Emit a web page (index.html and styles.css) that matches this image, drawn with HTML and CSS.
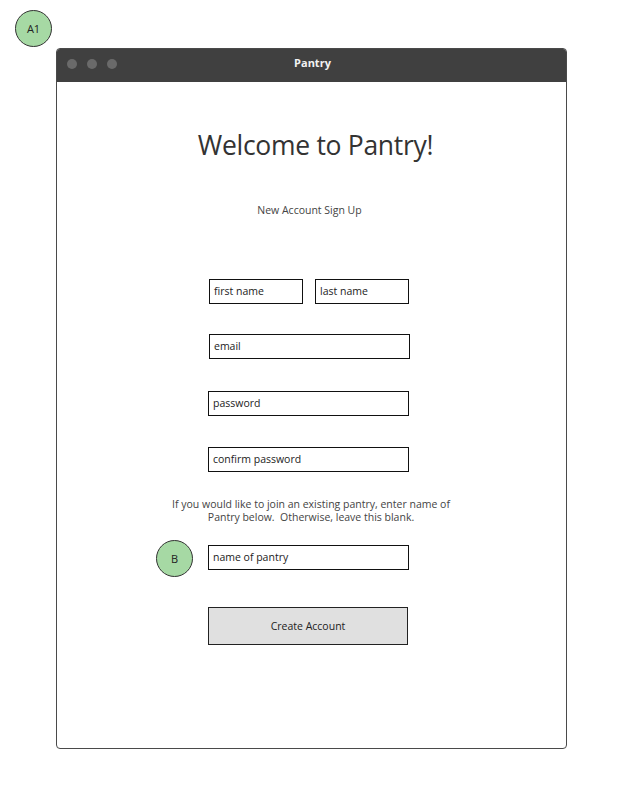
FILE: index.html
```html
<!DOCTYPE html>
<html>
<head>
<meta charset="utf-8">
<link rel="stylesheet" href="styles.css">
</head>
<body>
<div class="page">
  <div class="badge badge-a1">A1</div>
  <div class="window">
    <div class="titlebar">
      <div class="dots"><span class="dot"></span><span class="dot"></span><span class="dot"></span></div>
      <div class="title">Pantry</div>
    </div>
    <div class="content">
      <h1 class="heading">Welcome to Pantry!</h1>
      <p class="subheading">New Account Sign Up</p>
      <div class="form">
        <div class="row row-names">
          <div class="field field-half">first name</div>
          <div class="field field-half">last name</div>
        </div>
        <div class="row row-email"><div class="field field-email">email</div></div>
        <div class="row row-pass"><div class="field">password</div></div>
        <div class="row row-confirm"><div class="field">confirm password</div></div>
      </div>
      <p class="note">If you would like to join an existing pantry, enter name of<br>Pantry below.&nbsp; Otherwise, leave this blank.</p>
      <div class="form">
        <div class="row row-pantry">
          <div class="badge badge-b">B</div>
          <div class="field">name of pantry</div>
        </div>
        <div class="button">Create Account</div>
      </div>
    </div>
  </div>
</div>
</body>
</html>
```

FILE: styles.css
```css
* { box-sizing: border-box; }
html, body { margin: 0; padding: 0; background: #fff; }
body {
  font-family: "Open Sans", "Noto Sans", sans-serif;
  color: #333;
  width: 634px;
  height: 799px;
  overflow: hidden;
}
.page {
  position: relative;
  padding: 48px 0 0 56px;
}
.badge {
  position: absolute;
  width: 37px;
  height: 37px;
  border-radius: 50%;
  background: #a6d9a4;
  border: 1px solid #333;
  font-size: 11px;
  color: #222;
  display: flex;
  align-items: center;
  justify-content: center;
}
.badge-a1 { left: 15px; top: 10px; }
.badge-b { left: -52px; top: -5px; }
.window {
  width: 511px;
  height: 701px;
  border: 1px solid #4a4a4a;
  border-radius: 4px;
  overflow: hidden;
  display: flex;
  flex-direction: column;
}
.titlebar {
  height: 33px;
  background: #404040;
  display: flex;
  align-items: center;
  position: relative;
  flex-shrink: 0;
}
.dots {
  display: flex;
  gap: 10px;
  padding-left: 10px;
  margin-top: -4px;
}
.dot {
  width: 10px;
  height: 10px;
  border-radius: 50%;
  background: #6a6a6a;
}
.title {
  position: absolute;
  left: 0; right: 0;
  text-align: center;
  color: #f2f2f2;
  font-weight: bold;
  font-size: 11px;
  top: 6px;
  padding-left: 2px;
}
.content {
  display: flex;
  flex-direction: column;
  align-items: center;
}
.heading {
  font-weight: normal;
  font-size: 26.5px;
  margin: 44px 0 0 8px;
  line-height: 38px;
  color: #333;
  letter-spacing: -0.3px;
}
.subheading {
  font-size: 10.5px;
  margin: 39px 0 0 -4px;
  line-height: 14px;
  color: #444;
}
.form {
  align-self: flex-start;
  margin-left: 151px;
  display: flex;
  flex-direction: column;
}
.row { display: flex; position: relative; }
.row-names { margin-top: 62px; gap: 12px; padding-left: 1px; }
.row-email { margin-top: 30px; padding-left: 1px; }
.row-pass { margin-top: 32px; }
.row-confirm { margin-top: 31px; }
.row-pantry { margin-top: 0; }
.field {
  width: 201px;
  height: 25px;
  border: 1px solid #111;
  font-size: 10.5px;
  line-height: 23px;
  padding-left: 4px;
  color: #222;
  background: #fff;
}
.field-half { width: 94px; }
.field-email { width: 201px; }
.note {
  font-size: 10.5px;
  line-height: 12.5px;
  text-align: center;
  margin: 26px 0 22px -1px;
  color: #444;
}
.button {
  margin-top: 37px;
  width: 200px;
  height: 38px;
  background: #e0e0e0;
  border: 1px solid #222;
  font-size: 10.5px;
  display: flex;
  align-items: center;
  justify-content: center;
  color: #222;
}
```
